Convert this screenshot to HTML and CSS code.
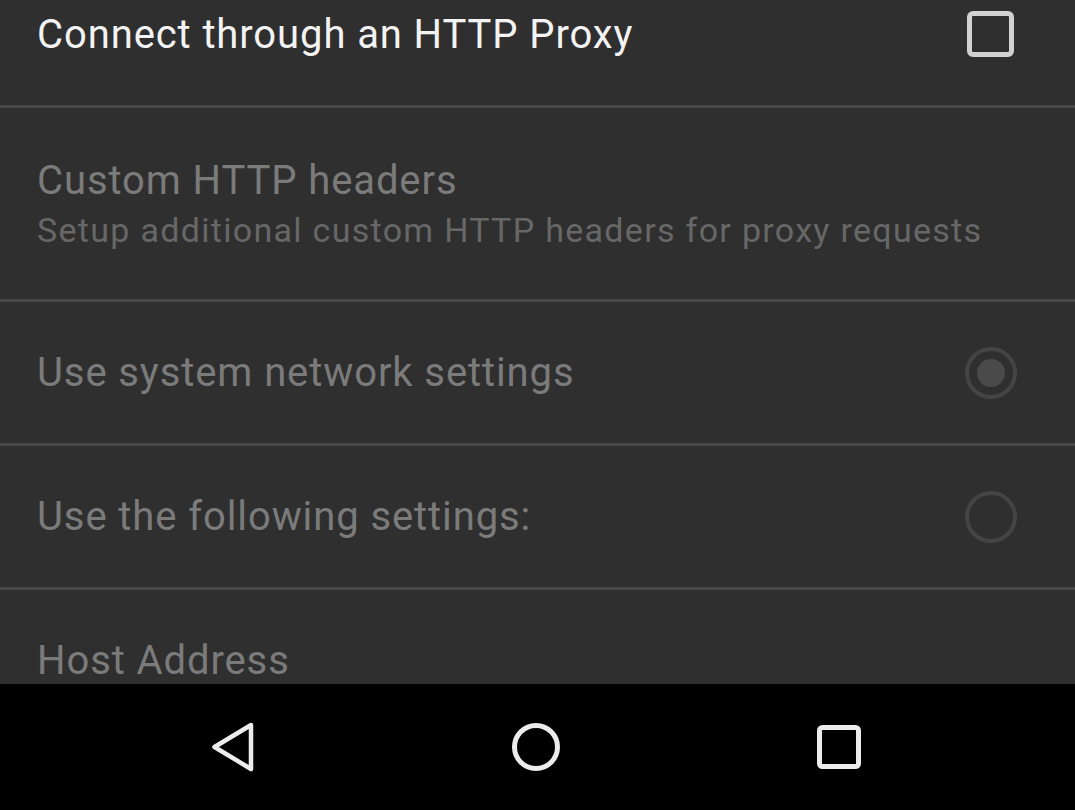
FILE: index.html
```html
<!DOCTYPE html>
<html>
<head>
<meta charset="utf-8">
<link rel="stylesheet" href="styles.css">
</head>
<body>
<div class="screen">
  <div class="content">
    <div class="list">
      <div class="row row-first">
        <div class="title title-on">Connect through an HTTP Proxy</div>
        <div class="checkbox"></div>
      </div>
      <div class="row row-two">
        <div class="texts">
          <div class="title">Custom HTTP headers</div>
          <div class="summary">Setup additional custom HTTP headers for proxy requests</div>
        </div>
      </div>
      <div class="row">
        <div class="title">Use system network settings</div>
        <div class="radio radio-on"><div class="dot"></div></div>
      </div>
      <div class="row">
        <div class="title">Use the following settings:</div>
        <div class="radio"></div>
      </div>
      <div class="row">
        <div class="title">Host Address</div>
      </div>
    </div>
  </div>
  <div class="navbar">
    <div class="navbtn">
      <svg width="60" height="60" viewBox="0 0 60 60"><path d="M48 8 L11.5 30 L48 52 Z" fill="none" stroke="#ececec" stroke-width="4.5" stroke-linejoin="round"/></svg>
    </div>
    <div class="navbtn">
      <svg width="60" height="60" viewBox="0 0 60 60"><circle cx="30" cy="30" r="21.5" fill="none" stroke="#ececec" stroke-width="5"/></svg>
    </div>
    <div class="navbtn">
      <svg width="60" height="60" viewBox="0 0 60 60"><rect x="10.5" y="10.5" width="39" height="39" rx="3" fill="none" stroke="#ececec" stroke-width="5"/></svg>
    </div>
  </div>
</div>
</body>
</html>
```

FILE: styles.css
```css
html, body {
  margin: 0;
  padding: 0;
  background: #000;
}
.screen {
  width: 1075px;
  height: 810px;
  display: flex;
  flex-direction: column;
  overflow: hidden;
  font-family: Roboto, "Noto Sans", sans-serif;
}
.content {
  height: 684px;
  background: #2f2f2f;
  overflow: hidden;
}
.list {
  margin-top: -36px;
}
.row {
  height: 141px;
  display: flex;
  align-items: center;
  justify-content: space-between;
  padding: 0 58px 0 37px;
  border-bottom: 3px solid #474747;
}
.row-two {
  height: 191px;
}
.title {
  font-size: 40px;
  letter-spacing: 0.9px;
  color: #7b7b7b;
  line-height: 46px;
  white-space: nowrap;
}
.title-on {
  color: #f3f3f3;
}
.summary {
  font-size: 34px;
  letter-spacing: 1.3px;
  color: #676767;
  line-height: 40px;
  margin-top: 6px;
  white-space: nowrap;
}
.texts {
  display: flex;
  flex-direction: column;
}
.checkbox {
  width: 37px;
  height: 36px;
  border: 5px solid #d2d2d2;
  border-radius: 6px;
  margin-right: 3px;
  margin-top: -2px;
}
.radio {
  width: 44px;
  height: 44px;
  border: 4px solid #444444;
  border-radius: 50%;
  display: flex;
  align-items: center;
  justify-content: center;
}
.dot {
  width: 28px;
  height: 28px;
  border-radius: 50%;
  background: #4a4a4a;
}
.navbar {
  height: 126px;
  background: #000;
  display: flex;
  justify-content: center;
  align-items: center;
  gap: 243px;
  padding-right: 4px;
}
.navbtn {
  width: 60px;
  height: 60px;
  display: flex;
}
```
